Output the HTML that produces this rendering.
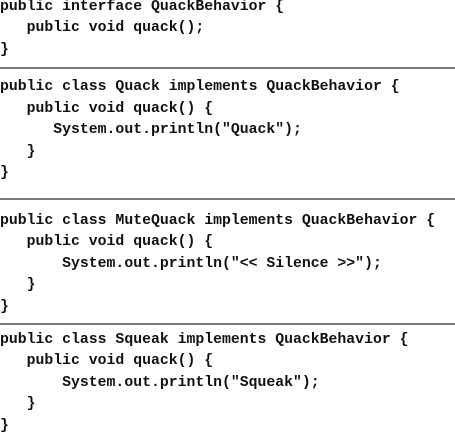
<!DOCTYPE html>
<html><head><meta charset="utf-8"><style>
html,body{margin:0;padding:0;background:#fff;width:455px;height:436px;overflow:hidden;position:relative}
pre{position:absolute;left:0;margin:0;font-family:"Liberation Mono","Courier New",monospace;font-weight:bold;font-size:14.8px;line-height:21.5px;color:#111;white-space:pre}
.hr{position:absolute;left:0;width:455px;height:2px;background:#7a7a7a}
</style></head><body>
<pre style="top:-3.5px">public interface QuackBehavior {
   public void quack();
}</pre>
<div class="hr" style="top:67px"></div>
<pre style="top:77px">public class Quack implements QuackBehavior {
   public void quack() {
      System.out.println("Quack");
   }
}</pre>
<div class="hr" style="top:198px"></div>
<pre style="top:210.5px">public class MuteQuack implements QuackBehavior {
   public void quack() {
       System.out.println("&lt;&lt; Silence &gt;&gt;");
   }
}</pre>
<div class="hr" style="top:323px"></div>
<pre style="top:329.5px">public class Squeak implements QuackBehavior {
   public void quack() {
       System.out.println("Squeak");
   }
}</pre>
</body></html>
